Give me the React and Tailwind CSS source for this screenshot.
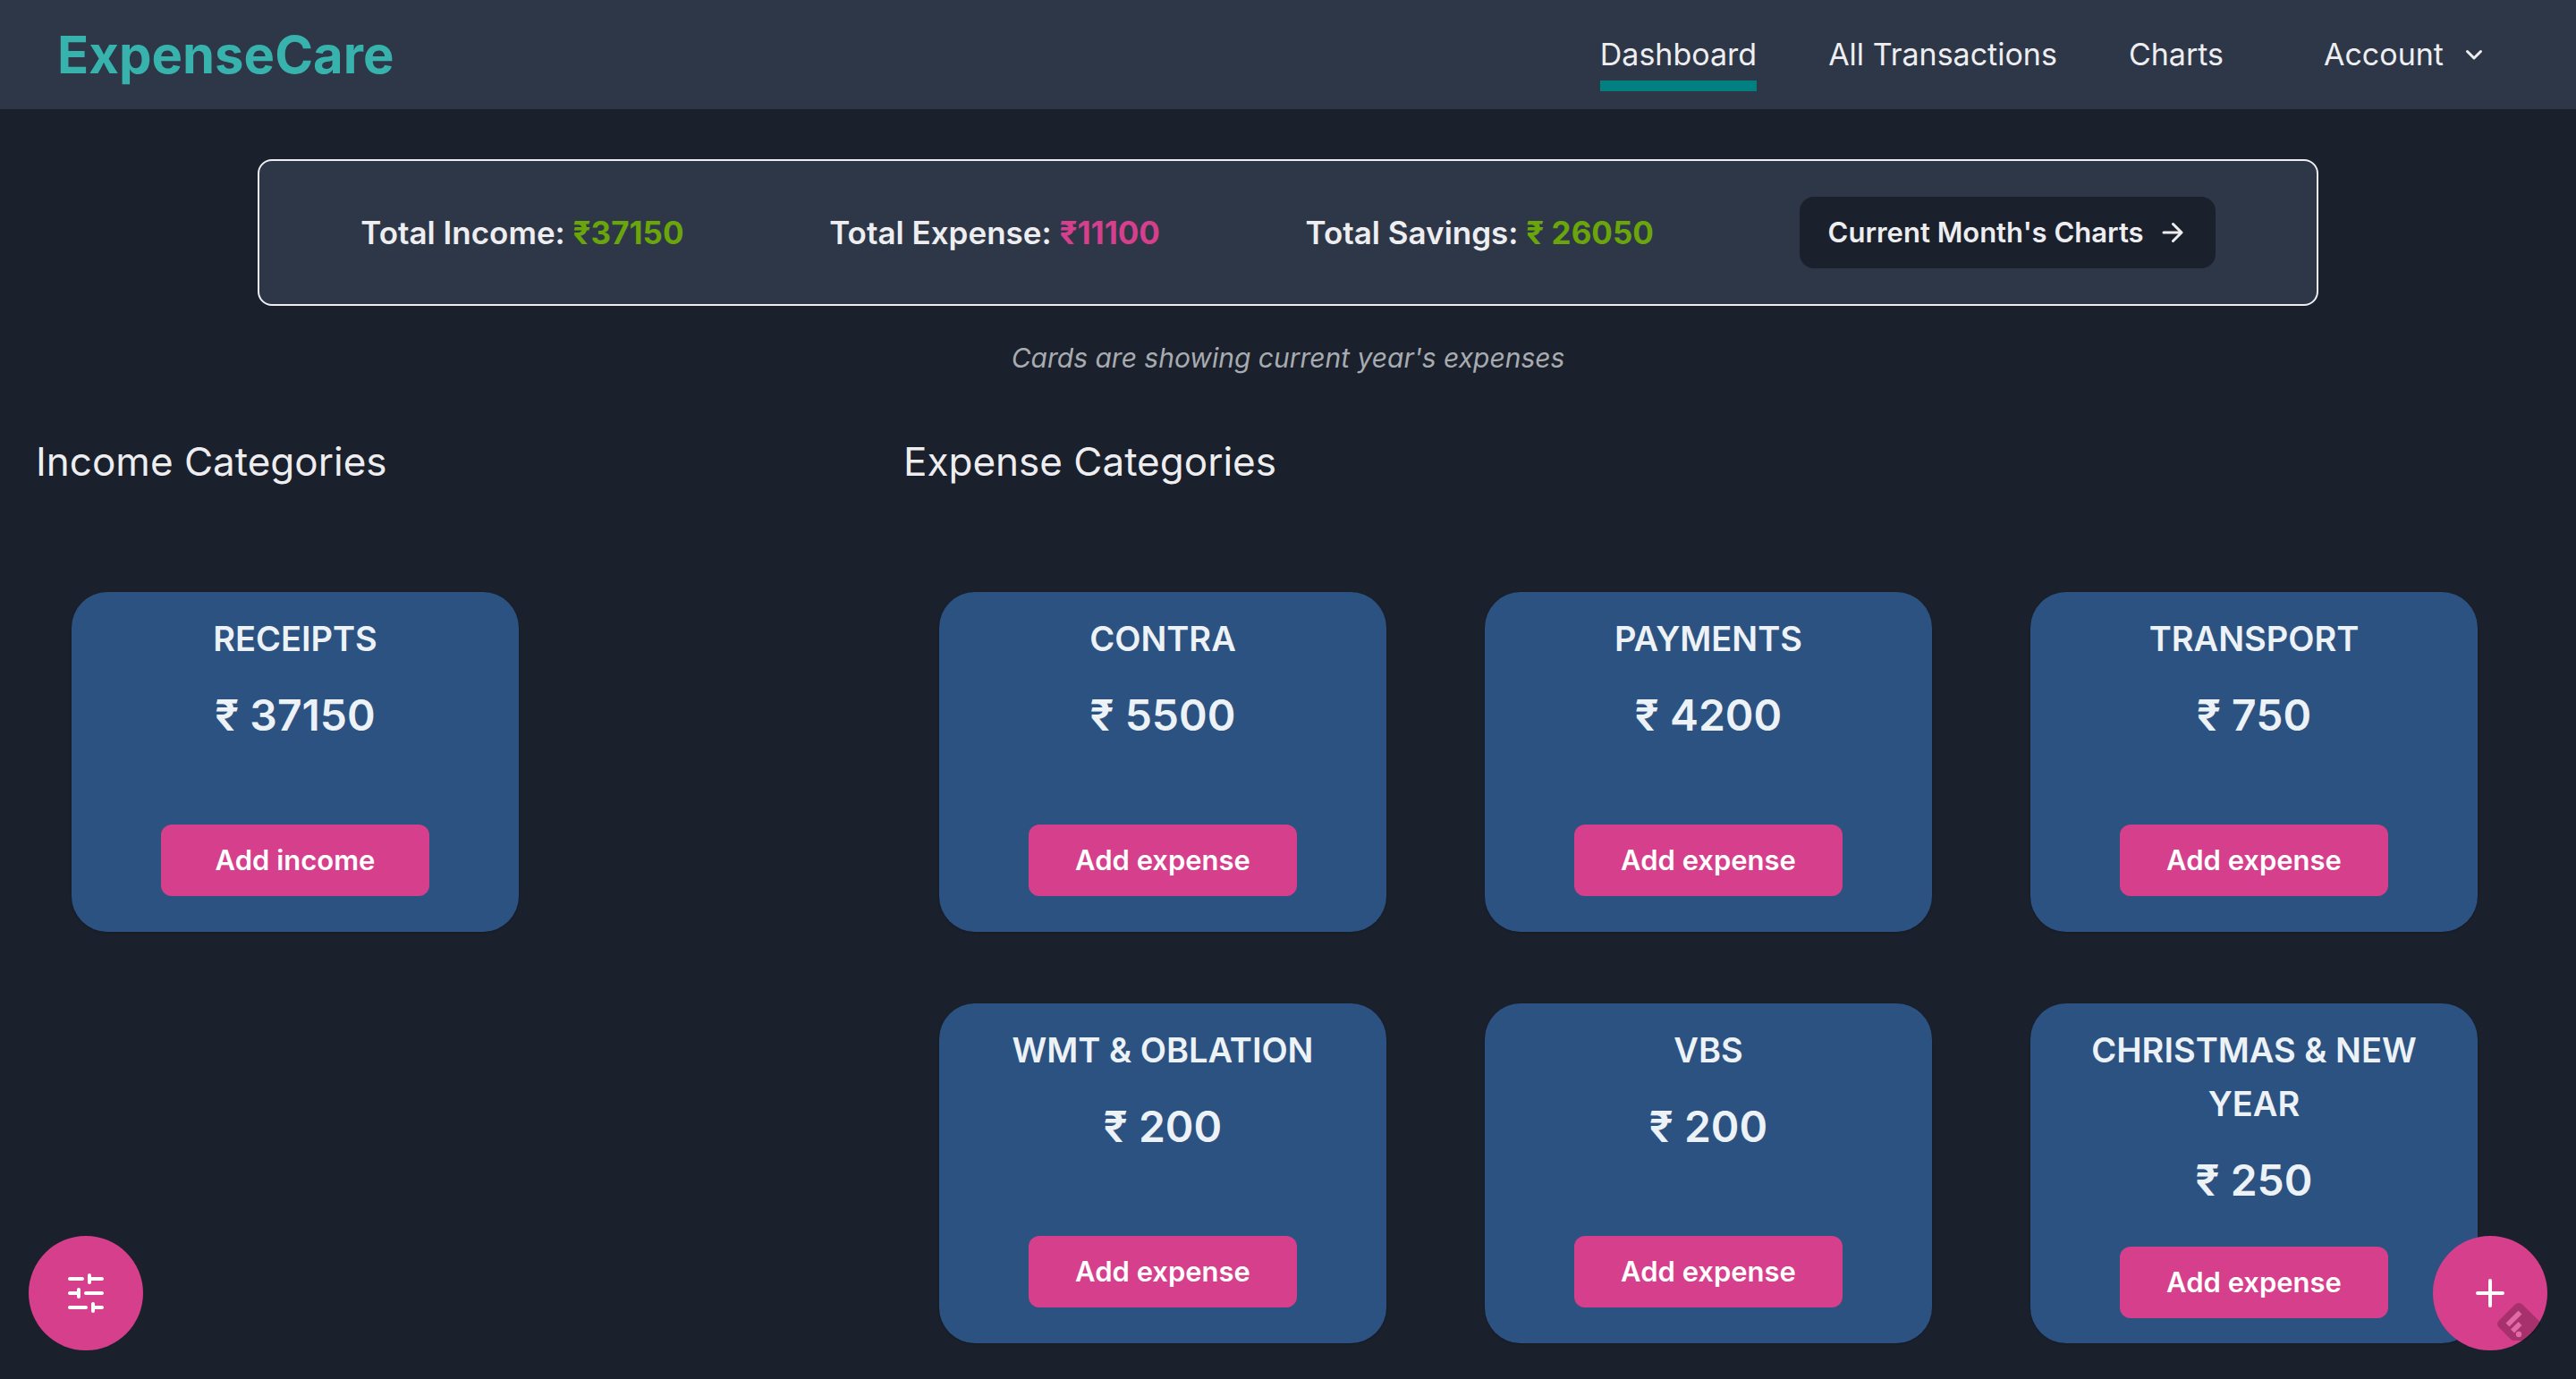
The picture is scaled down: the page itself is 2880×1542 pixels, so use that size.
import React from "react";

const NAV_LINKS = ["All Transactions", "Charts"];

const INCOME = [{ name: "RECEIPTS", amount: 37150 }];

const EXPENSES = [
  { name: "CONTRA", amount: 5500 },
  { name: "PAYMENTS", amount: 4200 },
  { name: "TRANSPORT", amount: 750 },
  { name: "WMT & OBLATION", amount: 200 },
  { name: "VBS", amount: 200 },
  { name: "CHRISTMAS & NEW YEAR", amount: 250 },
];

function Header() {
  return (
    <header className="flex h-[122px] items-center justify-between bg-[#2d3748] pl-16 pr-[104px]">
      <a href="#home" className="text-[58px] leading-[72px] font-bold text-[#38b2ac]">
        ExpenseCare
      </a>
      <nav className="flex items-center text-[34px] leading-[54px]">
        <a href="#dashboard" className="relative mr-20">
          Dashboard
          <span className="absolute inset-x-0 top-full mt-0.5 h-3 bg-[#008080]" />
        </a>
        {NAV_LINKS.map((label) => (
          <a key={label} href="#page" className="mr-20">
            {label}
          </a>
        ))}
        <button type="button" className="ml-8 flex items-center gap-6">
          Account
          <svg className="size-5" viewBox="0 0 20 20" fill="none" stroke="currentColor" strokeWidth="3" strokeLinecap="round" strokeLinejoin="round" aria-hidden="true">
            <path d="M2.500 6.500 10 14l7.500-7.500" />
          </svg>
        </button>
      </nav>
    </header>
  );
}

function Summary() {
  return (
    <section className="mx-auto mt-14 flex w-4/5 items-center justify-around rounded-2xl border-2 border-[#eeeef0] bg-[#2d3748] px-8 py-10 text-[35px] leading-[54px] font-semibold">
      <p>
        Total Income: <span className="font-bold text-[#6aa50b]">₹37150</span>
      </p>
      <p>
        Total Expense: <span className="font-bold text-[#d53f8c]">₹11100</span>
      </p>
      <p>
        Total Savings: <span className="font-bold text-[#6aa50b]">₹ 26050</span>
      </p>
      <button type="button" className="flex h-20 items-center gap-4 rounded-2xl bg-[#1a202c] px-8 text-[31px] font-semibold">
        Current Month's Charts
        <svg className="size-8" viewBox="0 0 32 32" fill="none" stroke="currentColor" strokeWidth="3" strokeLinecap="round" strokeLinejoin="round" aria-hidden="true">
          <path d="M6 16h20M16.500 6.500 26 16l-9.500 9.500" />
        </svg>
      </button>
    </section>
  );
}

function CategoryCard({ name, amount, action }) {
  return (
    <article className="flex h-[380px] w-[500px] flex-col items-center rounded-[40px] bg-[#2c5282] px-10 pt-[22px] text-center font-semibold text-[#edf2f7] shadow-sm">
      <div className="min-h-[200px]">
        <h3 className="text-[38px] leading-[60px]">{name}</h3>
        <p className="mt-5 text-[48px] leading-[72px]">₹ {amount}</p>
      </div>
      <button type="button" className="mt-[38px] h-20 w-[300px] shrink-0 rounded-xl bg-[#d53f8c] text-[31px] text-white">
        {action}
      </button>
    </article>
  );
}

export default function App() {
  return (
    <div className="h-screen overflow-hidden bg-[#1a202c] font-['Inter',sans-serif] text-[#eeeef0]">
      <Header />
      <main>
        <Summary />
        <p className="mt-[34px] text-center text-[30px] leading-[48px] text-[#a8abb0] italic">
          Cards are showing current year's expenses
        </p>
        <div className="mt-14 grid grid-cols-[97fr_183fr] px-10">
          <section>
            <h2 className="text-[44px] leading-[72px]">Income Categories</h2>
            <div className="mt-[110px] pl-10">
              {INCOME.map((c) => (
                <CategoryCard key={c.name} {...c} action="Add income" />
              ))}
            </div>
          </section>
          <section>
            <h2 className="text-[44px] leading-[72px]">Expense Categories</h2>
            <div className="mt-[110px] grid grid-cols-3 gap-y-20">
              {EXPENSES.map((c) => (
                <div key={c.name} className="pl-10">
                  <CategoryCard {...c} action="Add expense" />
                </div>
              ))}
            </div>
          </section>
        </div>
      </main>

      <button type="button" aria-label="Filters" className="fixed bottom-8 left-8 flex size-32 items-center justify-center rounded-full bg-[#d53f8c] text-white">
        <svg className="h-11 w-10" viewBox="0 0 40 44" fill="none" stroke="currentColor" strokeWidth="4" strokeLinecap="round" aria-hidden="true">
          <path d="M2 6h14M24 2v8M24 6h14M2 22h10M12 18v8M20 22h18M2 38h18M28 34v8M28 38h10" />
        </svg>
      </button>
      <button type="button" aria-label="Add transaction" className="fixed right-8 bottom-8 flex size-32 items-center justify-center rounded-full bg-[#d53f8c] text-white">
        <svg className="size-8" viewBox="0 0 32 32" fill="none" stroke="currentColor" strokeWidth="4" strokeLinecap="round" aria-hidden="true">
          <path d="M16 2v28M2 16h28" />
        </svg>
      </button>
      <svg className="fixed right-10 bottom-[42px] h-[44px] w-[48px]" viewBox="0 0 48 44" aria-hidden="true">
        <path d="M20 2.500a6 6 0 0 1 8 0L46.500 21a5 5 0 0 1 0 7L33 41.500a5 5 0 0 1-4 1.500H19a5 5 0 0 1-4-1.500L1.500 28a5 5 0 0 1 0-7z" fill="#000" fillOpacity="0.22" />
        <g fill="none" stroke="#e26aa6" strokeWidth="5.5">
          <path d="M11.500 25.500 25.500 11.500M17 32.500l8.500-8.500" />
        </g>
        <circle cx="24" cy="36" r="3.2" fill="#e26aa6" />
      </svg>
    </div>
  );
}
